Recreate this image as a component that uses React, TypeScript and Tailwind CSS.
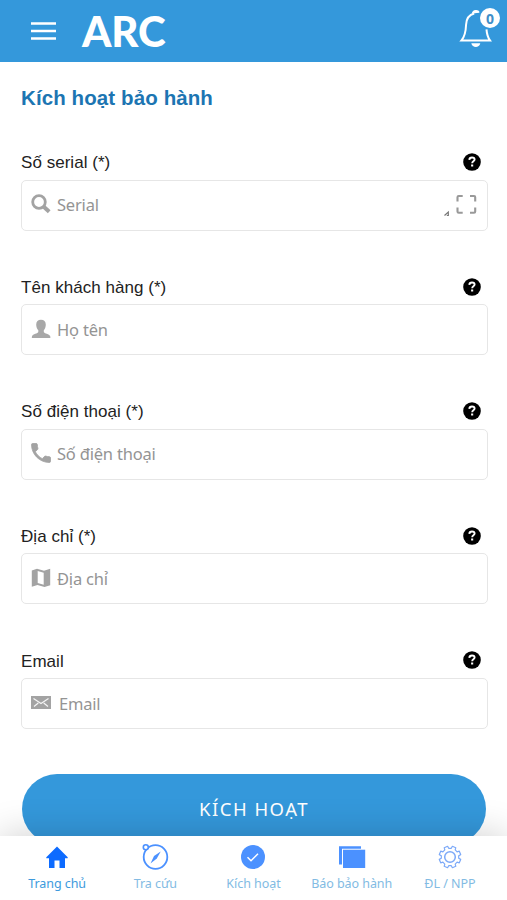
import type { ReactNode } from "react";

const textFont = "font-['Noto_Sans','Open_Sans',sans-serif]";
const labelFont = "font-['Liberation_Sans',Arial,sans-serif]";

function SearchIcon() {
  return (
    <svg viewBox="0 0 20 20" className="h-5 w-5" fill="none" stroke="#a3a3a3">
      <circle cx="8" cy="8" r="6.300" strokeWidth="2.800" />
      <path d="M12.500 12.500 18.200 17.800" strokeWidth="4" />
    </svg>
  );
}

function PersonIcon() {
  return (
    <svg viewBox="0 0 20 20" className="h-5 w-5" fill="#a8a8a8">
      <path d="M10 .8c3 0 4.800 1.900 4.800 4.900 0 2.200-.9 4.300-2 5.500v1.700c.4 1.500 5.600 1.900 6.400 4.200l.2 1.900H.8l.2-1.900c.8-2.300 5.900-2.700 6.300-4.200v-1.700c-1.200-1.200-2.100-3.300-2.100-5.500C5.200 2.700 7 .8 10 .8Z" />
    </svg>
  );
}

function PhoneIcon() {
  return (
    <svg viewBox="2.500 2.500 19 19" className="h-5 w-5" fill="#a3a3a3" stroke="#a3a3a3" strokeWidth=".8">
      <path d="M6.620 10.790c1.440 2.830 3.760 5.140 6.590 6.590l2.200-2.200c.27-.27.67-.36 1.020-.24 1.120.37 2.330.57 3.570.57.55 0 1 .45 1 1V20c0 .55-.45 1-1 1-9.390 0-17-7.610-17-17 0-.55.45-1 1-1h3.500c.55 0 1 .45 1 1 0 1.250.2 2.450.57 3.570.11.35.03.740-.25 1.020l-2.200 2.200Z" />
    </svg>
  );
}

function MapIcon() {
  return (
    <svg viewBox="0 0 20 20" className="h-5 w-5">
      <path d="M.8 2.500 6 .8l7 2L19.200.8v16.500L13.500 19l-7-2-5.700 1.700Z" fill="#a3a3a3" />
      <path d="m6.700 3 6 1.700v12L6.700 15Z" fill="#fff" />
    </svg>
  );
}

function MailIcon() {
  return (
    <svg viewBox="0 0 20 13" className="h-[13px] w-5">
      <path d="M0 0h20v13H0Z" fill="#a3a3a3" />
      <path d="m2.500 2.500 7.500 5 7.500-5M3 10.500 7.300 7M17 10.500 12.700 7" fill="none" stroke="#f5f5f5" strokeWidth="1.200" />
    </svg>
  );
}

function ScanIcon() {
  return (
    <svg viewBox="0 0 34 24" className="h-6 w-[34px]" fill="none" stroke="#999">
      <path d="M14.500 8.500V4.200q0-1.200 1.200-1.200h4M27 3h4q1.200 0 1.200 1.200v4.300M32.200 14.500v4q0 1.200-1.200 1.200h-4M19.700 19.700h-4q-1.200 0-1.200-1.200v-4" strokeWidth="2.100" />
      <path d="M1.500 22.500 5.300 19v3.500H3.800" stroke="#777" strokeWidth="1.200" />
    </svg>
  );
}

type Field = {
  label: string;
  placeholder: string;
  icon: ReactNode;
  placeholderClass?: string;
  action?: ReactNode;
};

const fields: Field[] = [
  { label: "Số serial (*)", placeholder: "Serial", icon: <SearchIcon />, action: <ScanIcon /> },
  { label: "Tên khách hàng (*)", placeholder: "Họ tên", icon: <PersonIcon /> },
  { label: "Số điện thoại (*)", placeholder: "Số điện thoại", icon: <PhoneIcon /> },
  { label: "Địa chỉ (*)", placeholder: "Địa chỉ", icon: <MapIcon /> },
  { label: "Email", placeholder: "Email", icon: <MailIcon />, placeholderClass: "pl-0.5" },
];

function FormField({ label, placeholder, icon, placeholderClass = "", action }: Field) {
  return (
    <div className="h-[124.6px] shrink-0">
      <div className="flex h-6 items-center justify-between pr-[6px]">
        <span className={`${labelFont} pt-[2px] text-[17px] tracking-[0.04px] text-[#222]`}>{label}</span>
        <svg viewBox="0 0 18 18" className="h-[18px] w-[18px]">
          <circle cx="9" cy="9" r="8.800" fill="#000" />
          <path d="M6.300 6.900C6.400 5.200 7.500 4.500 9 4.500c1.600 0 2.600.8 2.600 2.100 0 1.800-2.400 1.700-2.400 3.600" fill="none" stroke="#fff" strokeWidth="1.900" />
          <path d="M8.100 11.500h2.100v2H8.100Z" fill="#fff" />
        </svg>
      </div>
      <div className="-mr-px mt-[5.500px] flex h-[51px] items-center rounded-[5px] border-[1.500px] border-[#e6e6e6] pr-[10px] pl-2">
        <span className="-mt-[2px] flex w-[21px] justify-center">{icon}</span>
        <span className={`${textFont} ml-[6px] flex-1 pt-px text-[16.500px] tracking-[-0.2px] text-[#949494] ${placeholderClass}`}>
          {placeholder}
        </span>
        {action}
      </div>
    </div>
  );
}

function HomeIcon() {
  return (
    <svg viewBox="0 0 28 28" className="h-7 w-7" fill="#0d6bff">
      <path d="M14 3.500 24.700 14.300v1H22V25h-5.500v-7.500h-5V25H6v-9.700H3.300v-1Z" />
    </svg>
  );
}

function CompassIcon() {
  return (
    <svg viewBox="0 0 28 28" className="h-7 w-7" fill="none" stroke="#4b91ff">
      <circle cx="14.500" cy="14" r="11.800" strokeWidth="1.800" />
      <circle cx="4.800" cy="4.300" r="2.500" fill="#fff" strokeWidth="1.600" />
      <path d="M19.700 8.500 15.800 15.600 9.500 20.500 13 13Z" fill="#4b91ff" stroke="none" />
    </svg>
  );
}

function CheckIcon() {
  return (
    <svg viewBox="0 0 28 28" className="h-7 w-7">
      <circle cx="14" cy="14" r="12" fill="#4b91ff" />
      <path d="m8.500 14.300 3.500 3.400 7-7" fill="none" stroke="#fff" strokeWidth="1.500" />
    </svg>
  );
}

function StackIcon() {
  return (
    <svg viewBox="0 0 28 28" className="h-7 w-7" fill="#4b91ff">
      <path d="M1 3.300h22v2.400H4V21.500H1Z" />
      <path d="M5 6.700h22.200V25H5Z" />
    </svg>
  );
}

function GearIcon() {
  return (
    <svg viewBox="0 0 28 28" className="h-7 w-7" fill="none" stroke="#7ca9f8" strokeWidth="1.200">
      <path d="m11.600 3.300 1.100 2h2.600l1.100-2 3.400 1.400-.6 2.200 1.900 1.900 2.200-.6 1.400 3.400-2 1.100v2.600l2 1.100-1.400 3.400-2.200-.6-1.900 1.900.6 2.200-3.400 1.400-1.100-2h-2.600l-1.100 2-3.400-1.400.6-2.200-1.900-1.900-2.200.6-1.400-3.400 2-1.100v-2.600l-2-1.100 1.400-3.400 2.200.6 1.900-1.900-.6-2.200Z" strokeLinejoin="round" />
      <circle cx="14" cy="14" r="5.300" strokeWidth="1.500" />
    </svg>
  );
}

const tabs = [
  { label: "Trang chủ", icon: <HomeIcon />, active: true },
  { label: "Tra cứu", icon: <CompassIcon />, active: false },
  { label: "Kích hoạt", icon: <CheckIcon />, active: false },
  { label: "Báo bảo hành", icon: <StackIcon />, active: false },
  { label: "ĐL / NPP", icon: <GearIcon />, active: false },
];

export default function App() {
  return (
    <main className="flex h-[900px] w-full flex-col overflow-hidden bg-white">
      <header className="flex h-[62px] shrink-0 items-center bg-[#3498db] pr-1 pl-[31px]">
        <svg viewBox="0 0 25 18" className="h-[18px] w-[25px]" stroke="#fff" strokeWidth="2.400">
          <path d="M0 1.500h25M0 9h25M0 16.500h25" />
        </svg>
        <span className="ml-[26px] font-['Lato',sans-serif] text-[42px] leading-none font-black tracking-[-0.2px] text-white">ARC</span>
        <div className="relative ml-auto h-[46px] w-[46px]">
          <svg viewBox="0 0 46 46" className="h-[46px] w-[46px]" fill="none" stroke="#fff" strokeWidth="2">
            <path d="M17.200 5.500c-6 1.500-7.800 6-8.100 11-.3 7-1.200 12-4.600 15.900H33c-2.600-3.500-3.200-6.400-3.500-11" />
            <path d="M15.800 5.500c.6-3 5-3.500 6-.8" fill="#fff" />
            <path d="M14.300 35.300h9c-1 5-8 5-9 0Z" fill="#fff" stroke="none" />
          </svg>
          <span className="absolute top-0 right-[3px] flex h-5 w-5 items-center justify-center rounded-full bg-white font-['Open_Sans',sans-serif] text-[14px] font-bold text-[#3f8fc9]">
            0
          </span>
        </div>
      </header>

      <section className="flex min-h-0 flex-1 flex-col overflow-hidden bg-white px-5 pt-[21px]">
        <h1 className={`${labelFont} mb-[39px] h-7 shrink-0 pl-px pt-px text-[20.500px] leading-7 font-bold tracking-[0.1px] text-[#1c75b2]`}>
          Kích hoạt bảo hành
        </h1>
        <div className="flex shrink-0 flex-col pl-px">
          {fields.map((field) => (
            <FormField key={field.label} {...field} />
          ))}
        </div>
        <button className={`${textFont} mr-px ml-[2px] mt-px h-[70px] shrink-0 rounded-full bg-[#3498db] text-[18.500px] tracking-[1.500px] text-white`}>
          KÍCH HOẠT
        </button>
      </section>

      <nav className="relative grid h-16 shrink-0 grid-cols-5 bg-white px-2 shadow-[0_-2px_36px_rgba(0,0,0,0.18)]">
        {tabs.map((tab) => (
          <div key={tab.label} className="flex flex-col items-center pt-[7px]">
            {tab.icon}
            <span
              className={`${textFont} mt-1 text-[12.500px] leading-[18px] tracking-[-0.05px] whitespace-nowrap ${
                tab.active ? "text-[#3d9add]" : "text-[#82bbe3]"
              }`}
            >
              {tab.label}
            </span>
          </div>
        ))}
      </nav>
    </main>
  );
}
